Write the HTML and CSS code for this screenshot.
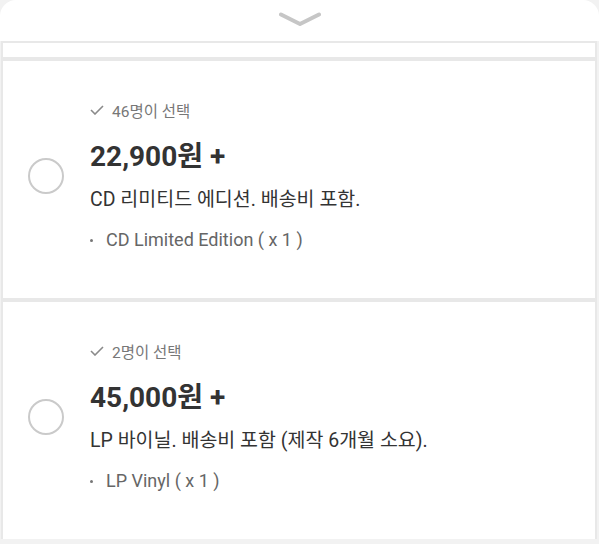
FILE: index.html
```html
<!DOCTYPE html>
<html lang="ko">
<head>
  <meta charset="UTF-8">
  <title>리워드 선택</title>
  <link rel="stylesheet" href="styles.css">
</head>
<body>
  <div class="sheet">
    <div class="sheet-head">
      <svg class="chevron" width="42" height="15" viewBox="0 0 42 15">
        <path d="M2 2.5 L21 12 L40 2.5" fill="none" stroke="#c6c6c6" stroke-width="4" stroke-linecap="round" stroke-linejoin="round"/>
      </svg>
    </div>

    <div class="rewards">
      <div class="reward reward-cut"></div>

      <div class="reward">
        <span class="radio"></span>
        <div class="info">
          <div class="picked">
            <svg class="check" width="14" height="10" viewBox="0 0 14 10">
              <path d="M1 5 L5 9 L13 1" fill="none" stroke="#8a8a8a" stroke-width="1.6"/>
            </svg>
            <span>46명이 선택</span>
          </div>
          <div class="price">22,900원 +</div>
          <div class="desc">CD 리미티드 에디션. 배송비 포함.</div>
          <ul class="items">
            <li>CD Limited Edition ( x 1 )</li>
          </ul>
        </div>
      </div>

      <div class="reward">
        <span class="radio"></span>
        <div class="info">
          <div class="picked">
            <svg class="check" width="14" height="10" viewBox="0 0 14 10">
              <path d="M1 5 L5 9 L13 1" fill="none" stroke="#8a8a8a" stroke-width="1.6"/>
            </svg>
            <span>2명이 선택</span>
          </div>
          <div class="price">45,000원 +</div>
          <div class="desc">LP 바이닐. 배송비 포함 (제작 6개월 소요).</div>
          <ul class="items">
            <li>LP Vinyl ( x 1 )</li>
          </ul>
        </div>
      </div>
    </div>
  </div>
</body>
</html>
```

FILE: styles.css
```css
body{
  margin: 0;
  background: #f2f2f2;
  font-family: Roboto, "Noto Sans CJK KR", sans-serif;
  color: #333;
}
.sheet{
  width: 599px;
}
.sheet-head{
  height: 41px;
  background: #fff;
  border-radius: 16px 16px 0 0;
  display: flex;
  justify-content: center;
  padding-top: 12px;
  box-sizing: border-box;
}
.rewards{
  margin: 0 2px 0 1px;
  padding: 2px 2px 0;
  background: #e8e8e8;
  display: flex;
  flex-direction: column;
  gap: 4px;
}
.reward{
  background: #fff;
  height: 237px;
  box-sizing: border-box;
  padding: 39px 0 46px 25px;
  display: flex;
  align-items: center;
}
.reward-cut{
  height: 14px;
  padding: 0;
}
.radio{
  width: 32px;
  height: 32px;
  border: 2px solid #cacaca;
  border-radius: 50%;
  flex-shrink: 0;
}
.info{
  margin-left: 26px;
}
.picked{
  display: flex;
  align-items: center;
  height: 20px;
  font-size: 15.5px;
  color: #777;
}
.check{
  margin-right: 8px;
}
.price{
  margin-top: 20px;
  height: 34px;
  line-height: 34px;
  font-size: 28px;
  font-weight: 700;
  color: #333;
}
.desc{
  margin-top: 13px;
  height: 26px;
  line-height: 26px;
  font-size: 19.5px;
  color: #333;
}
.items{
  list-style: none;
  margin: 15px 0 0;
  padding: 0;
}
.items li{
  position: relative;
  height: 24px;
  line-height: 24px;
  padding-left: 16px;
  font-size: 18px;
  color: #666;
}
.items li::before{
  content: '';
  position: absolute;
  left: 0;
  top: 11px;
  width: 3px;
  height: 3px;
  border-radius: 50%;
  background: #777;
}
```
